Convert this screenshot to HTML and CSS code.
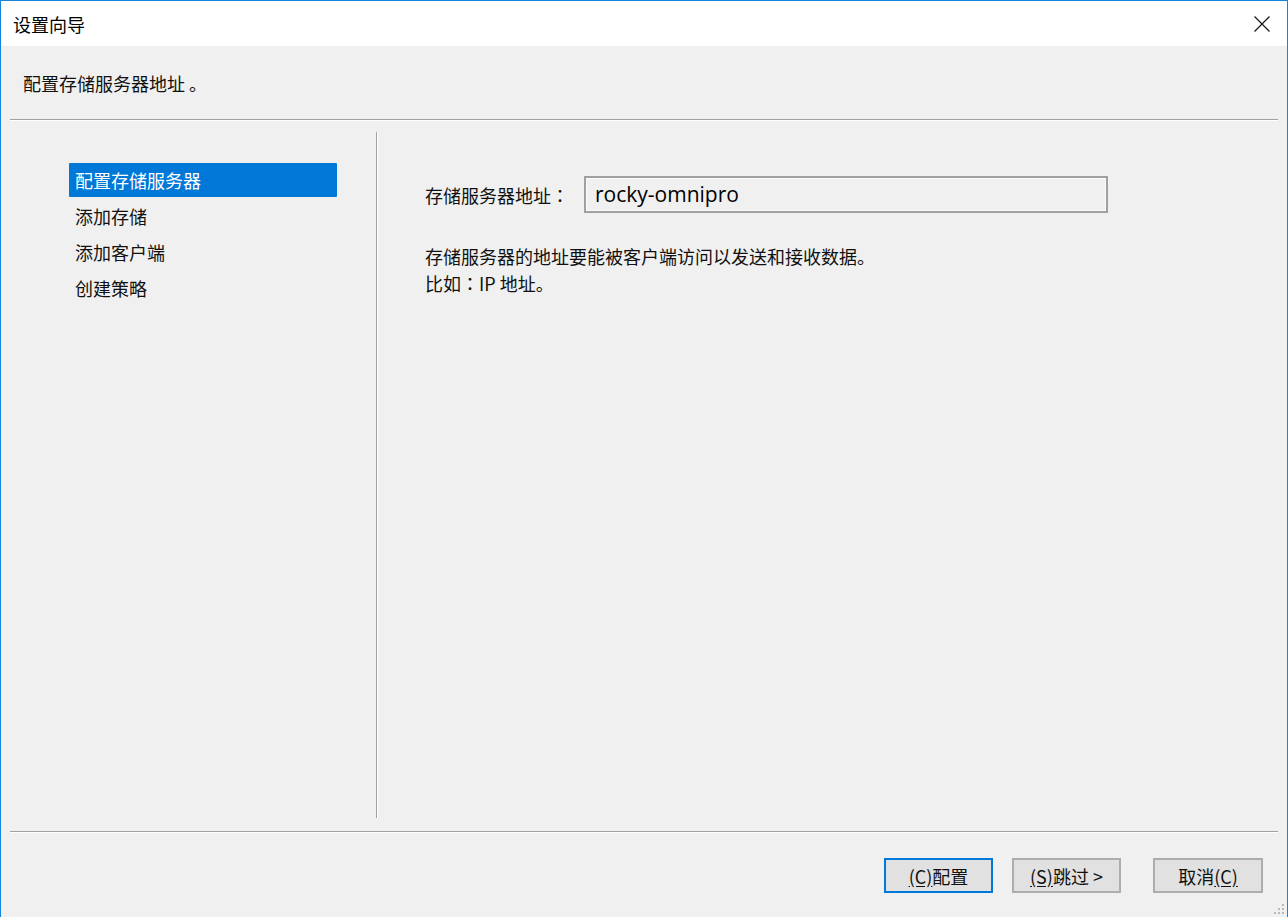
FILE: index.html
```html
<!DOCTYPE html>
<html lang="zh-CN">
<head>
<meta charset="utf-8">
<title>设置向导</title>
<link rel="stylesheet" href="styles.css">
</head>
<body>
<div class="window">
  <div class="titlebar">
    <span class="title">设置向导</span>
    <span class="close">
      <svg width="18" height="18" viewBox="0 0 18 18"><path d="M1.5 1.5 L16.5 16.5 M16.5 1.5 L1.5 16.5" stroke="#1a1a1a" stroke-width="1.3" fill="none"/></svg>
    </span>
  </div>
  <div class="header">
    <span class="header-text">配置存储服务器地址 <span class="jp" lang="ja">。</span></span>
  </div>
  <div class="hsep"></div>
  <div class="main">
    <div class="nav">
      <div class="nav-item active">配置存储服务器</div>
      <div class="nav-item">添加存储</div>
      <div class="nav-item">添加客户端</div>
      <div class="nav-item">创建策略</div>
    </div>
    <div class="vsep"></div>
    <div class="content">
      <div class="field-row">
        <span class="label">存储服务器地址<span class="jp" lang="ja">：</span></span>
        <div class="input">rocky-omnipro</div>
      </div>
      <div class="desc">
        <div>存储服务器的地址要能被客户端访问以发送和接收数据。</div>
        <div>比如<span class="jp" lang="ja">：</span>IP 地址。</div>
      </div>
    </div>
  </div>
  <div class="hsep"></div>
  <div class="footer">
    <button class="btn primary"><u>(C)</u>配置</button>
    <button class="btn"><u>(S)</u>跳过 &gt;</button>
    <button class="btn cancel">取消<u>(C)</u></button>
    <span class="grip">
      <svg width="12" height="12" viewBox="0 0 12 12" fill="#b8b8b8">
        <rect x="9" y="1" width="2" height="2"/>
        <rect x="5" y="5" width="2" height="2"/><rect x="9" y="5" width="2" height="2"/>
        <rect x="1" y="9" width="2" height="2"/><rect x="5" y="9" width="2" height="2"/><rect x="9" y="9" width="2" height="2"/>
      </svg>
    </span>
  </div>
</div>
</body>
</html>
```
FILE: styles.css
```css
html, body {
  margin: 0;
  padding: 0;
  background: #f0f0f0;
}
body {
  font-family: "Noto Sans CJK SC", "Noto Sans", sans-serif;
  color: #1a1a1a;
}
.jp {
  font-family: "Noto Sans CJK JP", sans-serif;
}
.window {
  box-sizing: border-box;
  width: 1288px;
  height: 917px;
  border: 1px solid #1883d7;
  border-bottom: none;
  background: #f0f0f0;
  display: flex;
  flex-direction: column;
}
.titlebar {
  height: 45px;
  background: #ffffff;
  display: flex;
  align-items: center;
  justify-content: space-between;
  flex: none;
}
.title {
  padding-left: 12px;
  font-size: 18px;
  color: #000;
}
.close {
  width: 18px;
  height: 18px;
  margin-right: 16px;
  display: flex;
}
.header {
  height: 73px;
  display: flex;
  align-items: center;
  flex: none;
}
.header-text {
  padding-left: 22px;
  font-size: 18px;
  color: #111;
}
.hsep {
  flex: none;
  height: 1px;
  margin: 0 9px;
  background: #a0a0a0;
  border-bottom: 1px solid #ffffff;
}
.main {
  flex: 1;
  display: flex;
  min-height: 0;
}
.nav {
  width: 268px;
  padding: 42px 39px 0 68px;
  display: flex;
  flex-direction: column;
  gap: 2px;
}
.nav-item {
  height: 34px;
  line-height: 34px;
  padding-left: 6px;
  font-size: 18px;
  color: #111;
}
.nav-item.active {
  background: #0078d7;
  color: #ffffff;
  border-radius: 1px;
}
.vsep {
  width: 1px;
  background: #a0a0a0;
  border-right: 1px solid #ffffff;
  margin: 11px 0 13px 0;
}
.content {
  flex: 1;
  padding: 55px 0 0 47px;
  color: #111;
}
.field-row {
  display: flex;
  align-items: center;
}
.label {
  width: 159px;
  font-size: 18px;
}
.input {
  box-sizing: border-box;
  width: 524px;
  height: 37px;
  border: 2px solid #a0a0a0;
  box-shadow: inset 0 0 0 1px #fafafa;
  background: #f0f0f0;
  padding-left: 9px;
  font-family: "Open Sans", "Noto Sans", sans-serif;
  font-size: 21px;
  line-height: 33px;
  color: #000;
}
.desc {
  margin-top: 30px;
  font-size: 18px;
  line-height: 27px;
}
.footer {
  flex: none;
  height: 84px;
  box-sizing: border-box;
  display: flex;
  align-items: flex-start;
  padding: 25px 0 0 883px;
  position: relative;
}
.btn {
  box-sizing: border-box;
  width: 109px;
  height: 35px;
  border: 2px solid #adadad;
  background: #e1e1e1;
  font-family: "Noto Sans CJK SC", "Noto Sans", sans-serif;
  font-size: 18px;
  color: #111;
  padding: 0;
  margin-right: 19px;
}
.btn u {
  text-decoration: underline;
  text-underline-offset: 2px;
}
.btn.primary {
  border-color: #0078d7;
}
.btn.cancel {
  margin-left: 13px;
  width: 110px;
}
.grip {
  position: absolute;
  right: 2px;
  bottom: 2px;
  width: 12px;
  height: 12px;
  display: flex;
}
```
